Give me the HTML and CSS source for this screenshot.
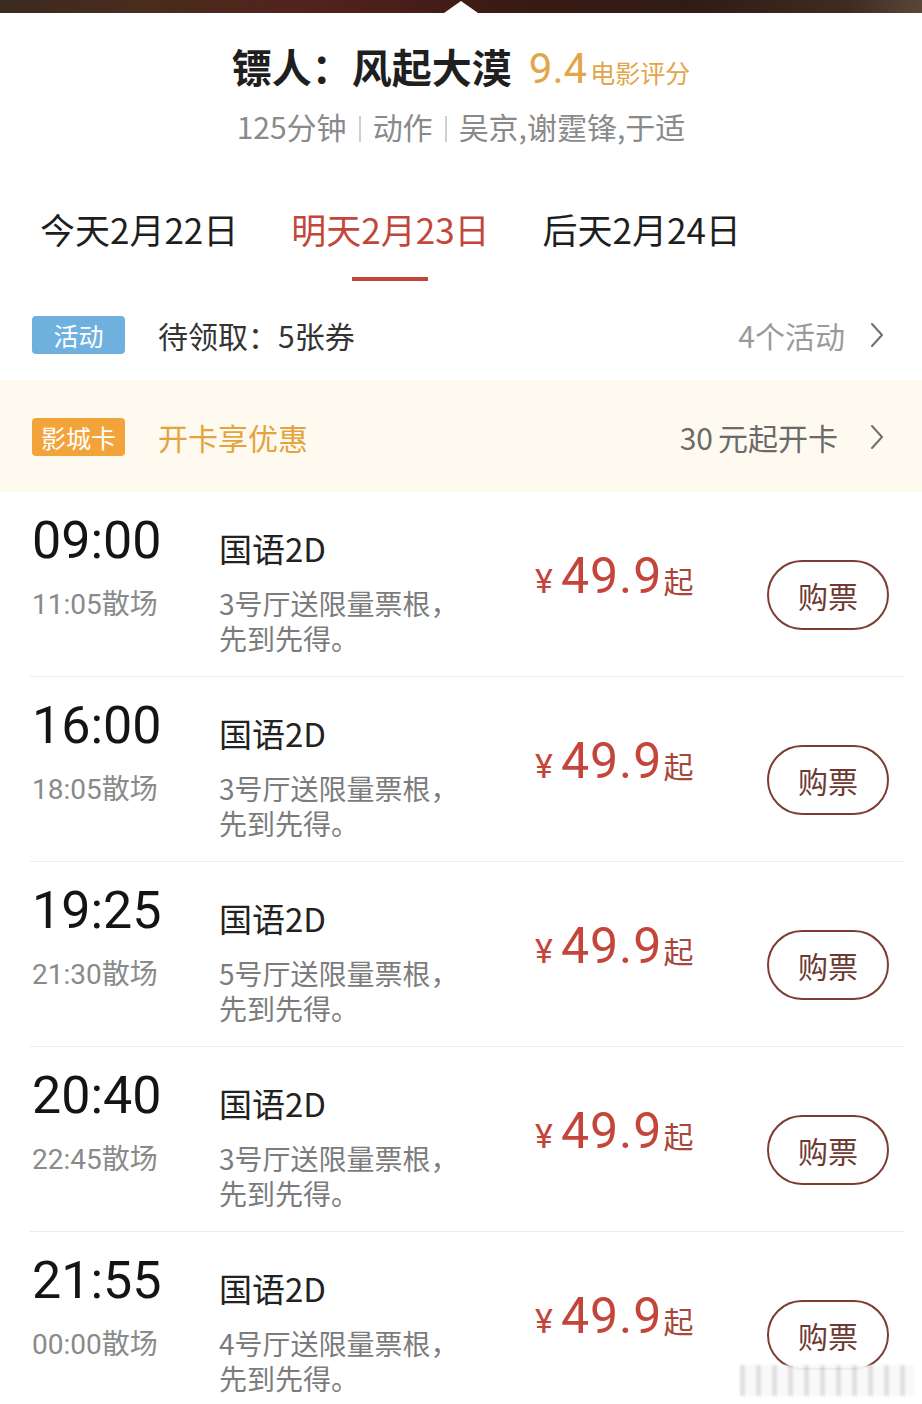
FILE: index.html
```html
<!DOCTYPE html>
<html lang="zh-CN">
<head>
<meta charset="utf-8">
<title>镖人：风起大漠</title>
<link rel="stylesheet" href="styles.css">
</head>
<body>
<div class="page">
  <div class="topbar"></div>
  <header class="movie">
    <h1 class="title"><span class="name">镖人：风起大漠</span><span class="score">9.4</span><span class="score-label">电影评分</span></h1>
    <p class="meta">125分钟<i class="sep"></i>动作<i class="sep"></i>吴京,谢霆锋,于适</p>
  </header>
  <nav class="tabs">
    <div class="tab">今天2月22日</div>
    <div class="tab active">明天2月23日<span class="bar"></span></div>
    <div class="tab">后天2月24日</div>
  </nav>
  <div class="promo">
    <span class="tag tag-blue">活动</span>
    <span class="promo-text">待领取：5张券</span>
    <span class="promo-right">4个活动</span>
    <svg class="chev" width="14" height="26" viewBox="0 0 14 26"><polyline points="2,2 12,13 2,24" fill="none" stroke="#6f6f6f" stroke-width="2" stroke-linecap="round" stroke-linejoin="round"/></svg>
  </div>
  <div class="promo card">
    <span class="tag tag-orange">影城卡</span>
    <span class="promo-text gold">开卡享优惠</span>
    <span class="promo-right dark">30<span class="gap"></span>元起开卡</span>
    <svg class="chev wide" width="14" height="26" viewBox="0 0 14 26"><polyline points="2,2 12,13 2,24" fill="none" stroke="#6f6f6f" stroke-width="2" stroke-linecap="round" stroke-linejoin="round"/></svg>
  </div>
  <ul class="sessions">
    <li class="session">
      <div class="col-time"><div class="start">09:00</div><div class="end">11:05散场</div></div>
      <div class="col-info"><div class="lang">国语2D</div><div class="desc">3号厅送限量票根，<br>先到先得。</div></div>
      <div class="col-price"><span class="yen">¥</span><span class="amount">49.9</span><span class="qi">起</span></div>
      <div class="col-buy"><span class="buy">购票</span></div>
    </li>
    <li class="session">
      <div class="col-time"><div class="start">16:00</div><div class="end">18:05散场</div></div>
      <div class="col-info"><div class="lang">国语2D</div><div class="desc">3号厅送限量票根，<br>先到先得。</div></div>
      <div class="col-price"><span class="yen">¥</span><span class="amount">49.9</span><span class="qi">起</span></div>
      <div class="col-buy"><span class="buy">购票</span></div>
    </li>
    <li class="session">
      <div class="col-time"><div class="start">19:25</div><div class="end">21:30散场</div></div>
      <div class="col-info"><div class="lang">国语2D</div><div class="desc">5号厅送限量票根，<br>先到先得。</div></div>
      <div class="col-price"><span class="yen">¥</span><span class="amount">49.9</span><span class="qi">起</span></div>
      <div class="col-buy"><span class="buy">购票</span></div>
    </li>
    <li class="session">
      <div class="col-time"><div class="start">20:40</div><div class="end">22:45散场</div></div>
      <div class="col-info"><div class="lang">国语2D</div><div class="desc">3号厅送限量票根，<br>先到先得。</div></div>
      <div class="col-price"><span class="yen">¥</span><span class="amount">49.9</span><span class="qi">起</span></div>
      <div class="col-buy"><span class="buy">购票</span></div>
    </li>
    <li class="session">
      <div class="col-time"><div class="start">21:55</div><div class="end">00:00散场</div></div>
      <div class="col-info"><div class="lang">国语2D</div><div class="desc">4号厅送限量票根，<br>先到先得。</div></div>
      <div class="col-price"><span class="yen">¥</span><span class="amount">49.9</span><span class="qi">起</span></div>
      <div class="col-buy"><span class="buy">购票</span></div>
    </li>
  </ul>
  <div class="watermark"></div>
</div>
</body>
</html>
```
FILE: styles.css
```css
html, body {
  margin: 0;
  padding: 0;
  background: #ffffff;
}

body {
  font-family: "Noto Sans CJK SC", "Noto Sans", sans-serif;
  color: #222;
}

.page {
  position: relative;
  width: 922px;
  height: 1404px;
  overflow: hidden;
  background: #fff;
}

.topbar {
  position: relative;
  height: 13px;
  background: linear-gradient(90deg, #3b2a1f 0%, #4a2c1e 15%, #52221c 35%, #3a1a15 55%, #2f1c15 75%, #3e2c22 92%, #5a4638 100%);
}

.topbar::after {
  content: "";
  position: absolute;
  left: 50%;
  bottom: 0;
  transform: translateX(-50%);
  border-left: 17px solid transparent;
  border-right: 17px solid transparent;
  border-bottom: 12px solid #fff;
}

.movie {
  text-align: center;
}

.title {
  margin: 29px 0 0;
  line-height: 48px;
  font-weight: normal;
  white-space: nowrap;
}

.name {
  font-size: 40px;
  font-weight: 700;
  color: #1f1f1f;
}

.score {
  margin-left: 17px;
  font-family: Roboto, "Noto Sans", sans-serif;
  font-size: 42px;
  color: #e2a64a;
}

.score-label {
  margin-left: 3px;
  font-size: 25px;
  color: #e2a64a;
}

.meta {
  margin: 10px 0 0;
  line-height: 40px;
  font-size: 30px;
  color: #8a8a8a;
  white-space: nowrap;
}

.sep {
  display: inline-block;
  width: 2px;
  height: 26px;
  margin: 0 12px;
  background: #cfcfcf;
  vertical-align: -3px;
}

.tabs {
  display: flex;
  align-items: flex-start;
  gap: 53px;
  margin-top: 61px;
  padding-left: 40px;
}

.tab {
  display: flex;
  flex-direction: column;
  align-items: center;
  font-size: 35px;
  line-height: 44px;
  color: #1e1e1e;
  white-space: nowrap;
}

.tab.active {
  color: #c2473a;
}

.bar {
  display: block;
  width: 76px;
  height: 4px;
  margin-top: 26px;
  background: #c2473a;
}

.promo {
  display: flex;
  align-items: center;
  box-sizing: border-box;
  height: 99px;
  padding: 9px 38px 0 32px;
}

.promo.card {
  height: 112px;
  padding-top: 2px;
  background: #fffaf0;
}

.tag {
  display: flex;
  align-items: center;
  justify-content: center;
  width: 93px;
  height: 38px;
  border-radius: 4px;
  color: #fff;
  font-size: 25px;
  flex: none;
}

.tag-blue {
  background: #6fb1de;
}

.tag-orange {
  background: #f2a43a;
}

.promo-text {
  margin-left: 33px;
  font-size: 30px;
  color: #333;
}

.promo-text.gold {
  color: #e3a43e;
}

.promo-right {
  margin-left: auto;
  font-size: 30px;
  color: #9a9a9a;
}

.promo-right.dark {
  color: #6a6a6a;
}

.gap {
  display: inline-block;
  width: 5px;
}

.chev {
  display: block;
  margin-left: 25px;
  flex: none;
}

.chev.wide {
  margin-left: 32px;
}

.sessions {
  list-style: none;
  margin: 0;
  padding: 0;
}

.session {
  display: grid;
  grid-template-columns: 187px 316px 232px 122px;
  align-items: start;
  height: 184px;
  margin: 0 17px 0 30px;
  padding-left: 2px;
  border-bottom: 1px solid #ececec;
}

.col-time {
  padding-top: 19px;
  font-family: Roboto, "Noto Sans CJK SC", sans-serif;
}

.start {
  font-size: 52px;
  line-height: 60px;
  color: #141414;
}

.end {
  margin-top: 16px;
  font-size: 28px;
  line-height: 36px;
  color: #8a8a8a;
  white-space: nowrap;
}

.col-info {
  padding-top: 34px;
}

.lang {
  font-size: 33px;
  line-height: 44px;
  color: #222;
}

.desc {
  margin-top: 16px;
  font-size: 28px;
  line-height: 35px;
  color: #7c7c7c;
  white-space: nowrap;
}

.col-price {
  padding-top: 56px;
  font-family: Roboto, "Noto Sans CJK SC", sans-serif;
  font-size: 50px;
  line-height: 56px;
  color: #c4463a;
  white-space: nowrap;
}

.yen {
  font-size: 34px;
  margin-right: 8px;
}

.amount {
  font-size: 50px;
  letter-spacing: 1px;
}

.qi {
  font-family: "Noto Sans CJK SC", sans-serif;
  font-size: 30px;
  margin-left: 1px;
  color: #a8463a;
}

.col-buy {
  padding-top: 68px;
}

.buy {
  display: flex;
  align-items: center;
  justify-content: center;
  box-sizing: border-box;
  width: 122px;
  height: 70px;
  border: 2.5px solid #7d3c32;
  border-radius: 35px;
  font-size: 30px;
  color: #6d3a33;
}

.watermark {
  position: absolute;
  left: 740px;
  top: 1365px;
  width: 174px;
  height: 31px;
  background: repeating-linear-gradient(90deg, rgba(222, 222, 222, 0.92) 0 5px, rgba(249, 249, 249, 0.94) 5px 16px);
  filter: blur(1px);
}
```
